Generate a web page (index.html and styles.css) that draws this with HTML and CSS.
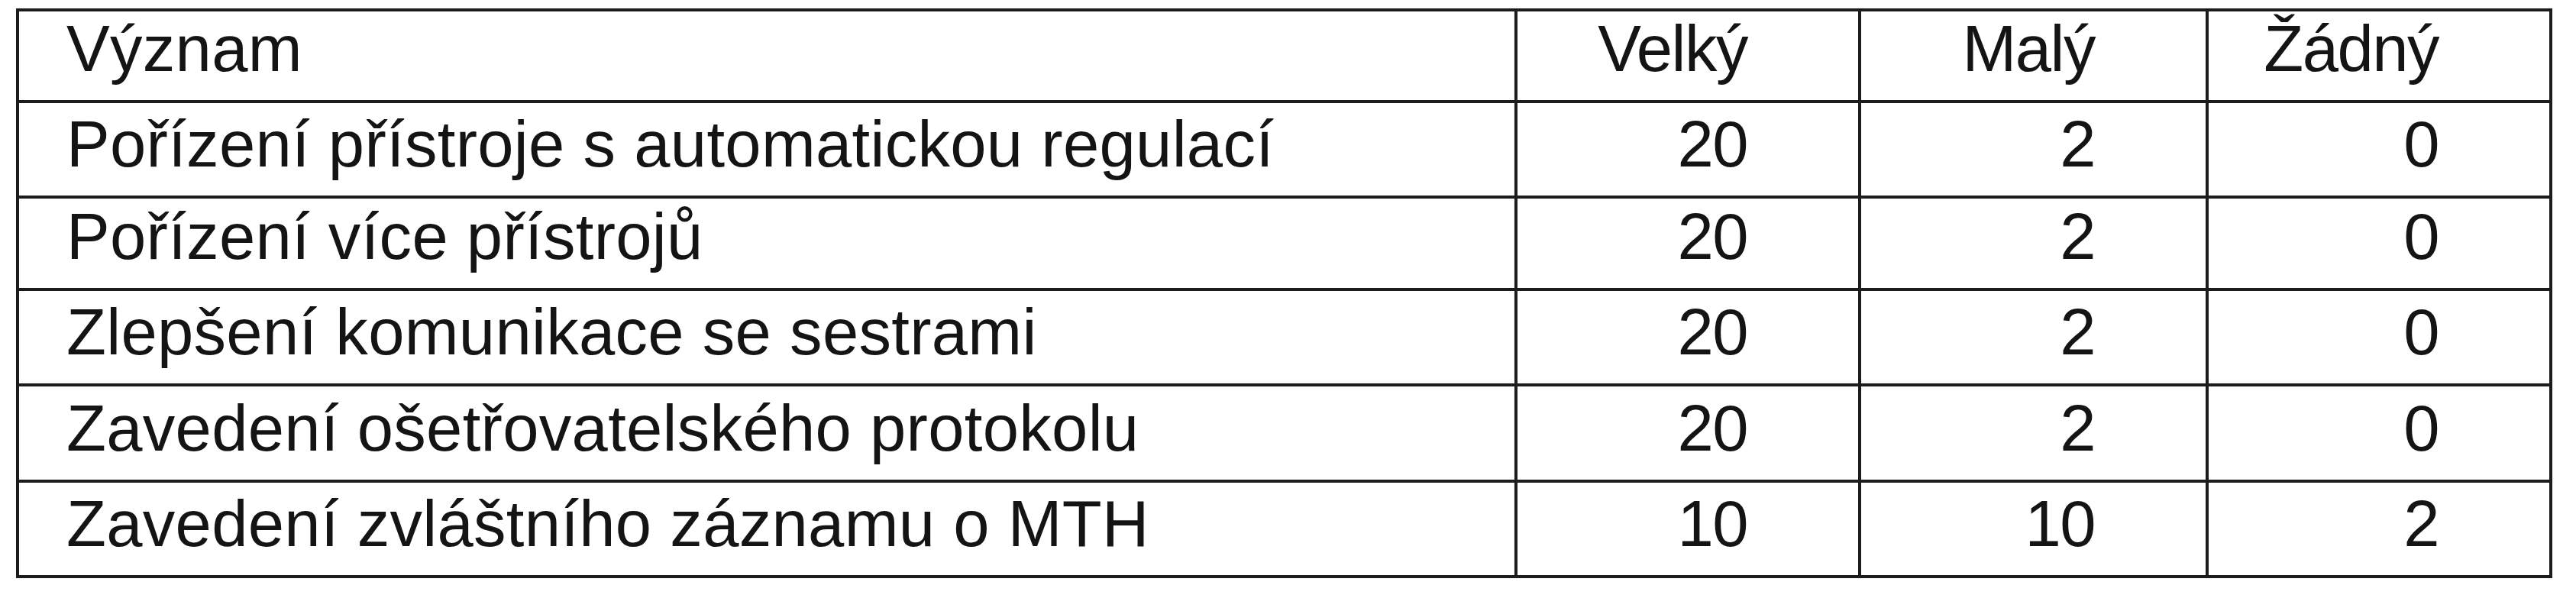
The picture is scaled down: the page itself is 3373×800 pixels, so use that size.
FILE: index.html
```html
<!DOCTYPE html>
<html lang="cs">
<head>
<meta charset="utf-8">
<title>Význam</title>
<link rel="stylesheet" href="styles.css">
</head>
<body>
<div class="tbl">
  <div class="c txt">Význam</div>
  <div class="c num">Velký</div>
  <div class="c num">Malý</div>
  <div class="c num">Žádný</div>

  <div class="c txt">Pořízení přístroje s automatickou regulací</div>
  <div class="c num">20</div>
  <div class="c num">2</div>
  <div class="c num">0</div>

  <div class="c txt">Pořízení více přístrojů</div>
  <div class="c num">20</div>
  <div class="c num">2</div>
  <div class="c num">0</div>

  <div class="c txt">Zlepšení komunikace se sestrami</div>
  <div class="c num">20</div>
  <div class="c num">2</div>
  <div class="c num">0</div>

  <div class="c txt">Zavedení ošetřovatelského protokolu</div>
  <div class="c num">20</div>
  <div class="c num">2</div>
  <div class="c num">0</div>

  <div class="c txt">Zavedení zvláštního záznamu o MTH</div>
  <div class="c num">10</div>
  <div class="c num">10</div>
  <div class="c num">2</div>
</div>
</body>
</html>
```
FILE: styles.css
```css
html, body {
  margin: 0;
  padding: 0;
  background: #ffffff;
}

body {
  padding: 11px 0 0 21px;
  font-family: "Liberation Sans", Arial, sans-serif;
  color: #141414;
}

.tbl {
  display: grid;
  width: 3321px;
  box-sizing: border-box;
  grid-template-columns: 1958px 446px 451px 446px;
  grid-template-rows: 116px 121px 117px 121px 122px 121px;
  gap: 4px;
  padding: 4px;
  background: #1c1c1c;
}

.c {
  background: #ffffff;
  display: flex;
  align-items: flex-end;
  font-size: 85px;
  line-height: 1;
  padding-bottom: 25px;
  box-sizing: border-box;
  white-space: nowrap;
}

.txt {
  padding-left: 62px;
  letter-spacing: 0.3px;
}

.num {
  justify-content: flex-end;
  padding-right: 145px;
  letter-spacing: -1.5px;
}
```
